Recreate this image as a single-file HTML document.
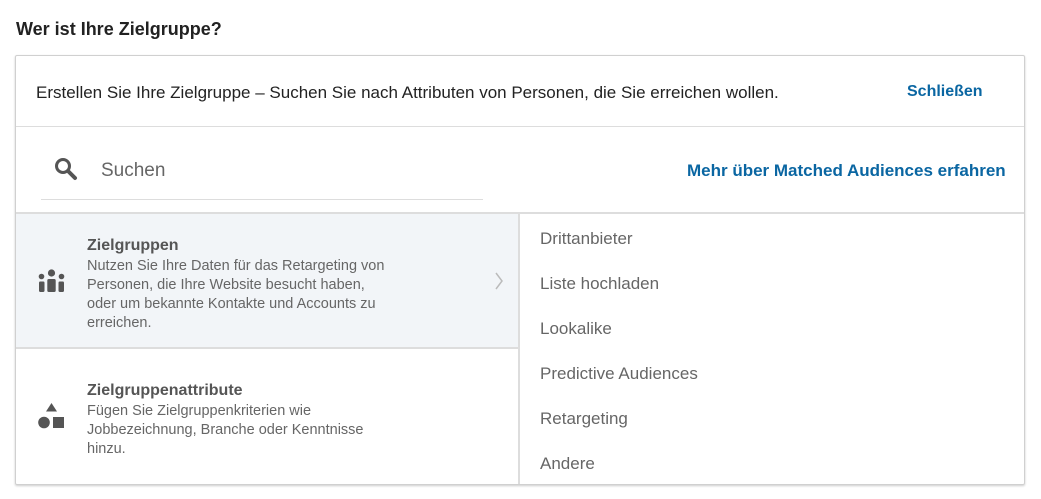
<!DOCTYPE html>
<html><head><meta charset="utf-8"><style>
body{margin:0;width:1041px;height:499px;background:#fff;font-family:"Liberation Sans",sans-serif;position:relative;overflow:hidden}
.a{position:absolute;white-space:nowrap}
</style></head><body>
<div class="a" style="left:16px;top:19px;font-size:18px;font-weight:bold;color:#222">Wer ist Ihre Zielgruppe?</div>
<div class="a" style="left:15px;top:55px;width:1008px;height:428px;border:1px solid #d0d0d0;border-radius:2px;box-shadow:0 1px 2px rgba(0,0,0,.2)"></div>
<div class="a" style="left:36px;top:83px;font-size:17px;color:#222">Erstellen Sie Ihre Zielgruppe – Suchen Sie nach Attributen von Personen, die Sie erreichen wollen.</div>
<div class="a" style="left:907px;top:83px;font-size:16px;font-weight:bold;color:#0a66a2">Schließen</div>
<div class="a" style="left:16px;top:126px;width:1008px;height:1px;background:#ddd"></div>
<svg class="a" style="left:53px;top:156px" width="26" height="26" viewBox="0 0 26 26"><circle cx="10" cy="10" r="6.5" fill="none" stroke="#555" stroke-width="3"/><path d="M15 15l7 7" stroke="#555" stroke-width="4" stroke-linecap="round"/></svg>
<div class="a" style="left:101px;top:160px;font-size:19px;color:#666">Suchen</div>
<div class="a" style="left:41px;top:199px;width:442px;height:1px;background:#ddd"></div>
<div class="a" style="left:687px;top:161px;font-size:17px;font-weight:bold;color:#0a66a2">Mehr über Matched Audiences erfahren</div>
<div class="a" style="left:16px;top:212px;width:1008px;height:2px;background:#ddd"></div>
<div class="a" style="left:16px;top:214px;width:503px;height:133px;background:#f2f5f8"></div>
<div class="a" style="left:16px;top:347px;width:503px;height:2px;background:#ddd"></div>
<div class="a" style="left:518px;top:212px;width:2px;height:272px;background:#ddd"></div>
<svg class="a" style="left:38px;top:269px" width="27" height="25" viewBox="0 0 27 25"><circle cx="13.5" cy="4" r="3.6" fill="#555"/><circle cx="3.5" cy="7.5" r="2.8" fill="#555"/><circle cx="23.5" cy="7.5" r="2.8" fill="#555"/><rect x="9.3" y="10" width="8.4" height="13" rx="1.5" fill="#555"/><rect x="1" y="12.5" width="5.5" height="10.5" rx="1.2" fill="#555"/><rect x="20.5" y="12.5" width="5.5" height="10.5" rx="1.2" fill="#555"/></svg>
<div class="a" style="left:87px;top:237px;font-size:16px;font-weight:bold;color:#555">Zielgruppen</div>
<div class="a" style="left:87px;top:257px;font-size:14.5px;line-height:19px;color:#666">Nutzen Sie Ihre Daten für das Retargeting von<br>Personen, die Ihre Website besucht haben,<br>oder um bekannte Kontakte und Accounts zu<br>erreichen.</div>
<svg class="a" style="left:494px;top:271px" width="10" height="20" viewBox="0 0 10 20"><path d="M2 2l6 8-6 8" fill="none" stroke="#bbb" stroke-width="1.5"/></svg>
<svg class="a" style="left:38px;top:403px" width="27" height="27" viewBox="0 0 27 27"><path d="M13.5 0L19 8.5H8z" fill="#555"/><circle cx="6" cy="19.5" r="5.8" fill="#555"/><rect x="15" y="14" width="11" height="11" fill="#555"/></svg>
<div class="a" style="left:87px;top:382px;font-size:16px;font-weight:bold;color:#555">Zielgruppenattribute</div>
<div class="a" style="left:87px;top:402px;font-size:14.5px;line-height:19px;color:#666">Fügen Sie Zielgruppenkriterien wie<br>Jobbezeichnung, Branche oder Kenntnisse<br>hinzu.</div>
<div class="a" style="left:540px;top:216px;font-size:17px;line-height:45px;color:#666">Drittanbieter<br>Liste hochladen<br>Lookalike<br>Predictive Audiences<br>Retargeting<br>Andere</div>
</body></html>
